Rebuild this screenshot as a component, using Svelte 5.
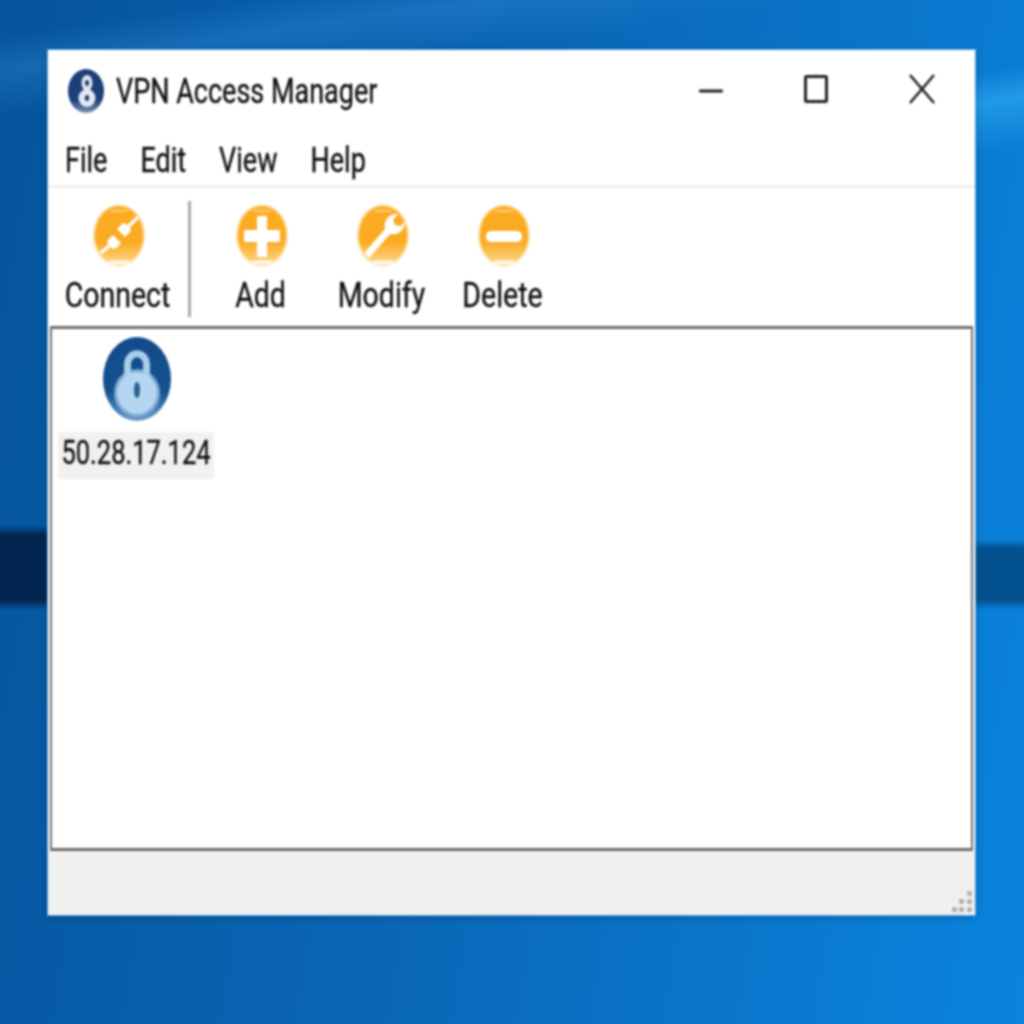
<script>
	const tools = [
		{ label: 'Add', kind: 'add' },
		{ label: 'Modify', kind: 'modify' },
		{ label: 'Delete', kind: 'delete' }
	];
	const menus = ['File', 'Edit', 'View', 'Help'];
</script>

{#snippet orb(kind)}
	<svg class="orb" viewBox="0 0 52 62" width="52" height="62">
		<ellipse cx="26" cy="31" rx="26" ry="31" fill="url(#orbRim)" />
		<ellipse cx="26" cy="31" rx="24" ry="29" fill="url(#orbFill)" />
		<ellipse cx="26" cy="6" rx="10" ry="1.5" fill="#fff" opacity="0.35" />
		{#if kind === 'add'}
			<path d="M22 12h8v14h13v10H30v15h-8V36H9V26h13z" fill="#fff" stroke="#fff" stroke-width="2" stroke-linejoin="round" />
		{:else if kind === 'delete'}
			<rect x="8" y="26" width="36" height="11" rx="5" fill="#fff" />
		{:else if kind === 'modify'}
			<path d="M8 47 L28 24 C26 15 33 8 41 9 L36 15 L38 20 L44 21 L48 16 C48 24 42 31 33 29 L13 52 Q9 53 8 47z" fill="#fff" />
		{:else}
			<path d="M9 47 L17 40" stroke="#fff" stroke-width="3.5" stroke-linecap="round" />
			<path d="M14 36 L20 30 L28 38 L22 44 Q17 44 14 36z" fill="#fff" />
			<path d="M24 24 L30 18 Q37 19 38 26 L32 32z" fill="#fff" />
			<path d="M36 21 L44 13" stroke="#fff" stroke-width="3.5" stroke-linecap="round" />
		{/if}
		<ellipse cx="26" cy="57" rx="12" ry="2" fill="#fff" opacity="0.8" />
	</svg>
{/snippet}

<div class="desktop">
	<svg class="defs" width="0" height="0" aria-hidden="true">
		<defs>
			<linearGradient id="orbRim" x1="0" y1="0" x2="0" y2="1">
				<stop offset="0" stop-color="#fcc561" />
				<stop offset="1" stop-color="#fff0d4" />
			</linearGradient>
			<linearGradient id="orbFill" x1="0" y1="0" x2="0" y2="1">
				<stop offset="0" stop-color="#fbab20" />
				<stop offset="0.6" stop-color="#fbab22" />
				<stop offset="1" stop-color="#fed88f" />
			</linearGradient>
			<linearGradient id="lockFill" x1="0" y1="0" x2="0" y2="1">
				<stop offset="0" stop-color="#134b8c" />
				<stop offset="0.65" stop-color="#14518f" />
				<stop offset="1" stop-color="#6f9cc8" />
			</linearGradient>
			<linearGradient id="iconFill" x1="0" y1="0" x2="0" y2="1">
				<stop offset="0" stop-color="#1d3f78" />
				<stop offset="0.7" stop-color="#1d4079" />
				<stop offset="1" stop-color="#7d92b5" />
			</linearGradient>
		</defs>
	</svg>

	<div class="window">
		<header class="titlebar">
			<svg class="app-icon" viewBox="0 0 36 44" width="36" height="44">
				<ellipse cx="18" cy="22" rx="18" ry="22" fill="url(#iconFill)" />
				<ellipse cx="19" cy="14" rx="5.5" ry="8" fill="#dfe5ee" />
				<ellipse cx="19" cy="29" rx="8.5" ry="9" fill="#e4e9f1" />
				<ellipse cx="19" cy="14" rx="2" ry="3" fill="#1d3f78" />
				<ellipse cx="19" cy="29" rx="2.2" ry="3" fill="#1d3f78" />
			</svg>
			<span class="title">VPN Access Manager</span>
			<div class="controls">
				<svg class="min" viewBox="0 0 24 4" width="24" height="4"><rect width="24" height="3" y="0.5" rx="1" fill="#222" /></svg>
				<svg viewBox="0 0 24 28" width="24" height="28"><rect x="1.5" y="1.5" width="21" height="25" rx="1" fill="none" stroke="#222" stroke-width="3" /></svg>
				<svg viewBox="0 0 26 30" width="26" height="30"><path d="M1 1 L25 29 M25 1 L1 29" stroke="#222" stroke-width="2.6" fill="none" /></svg>
			</div>
		</header>

		<nav class="menubar">
			{#each menus as m}
				<span class="menu">{m}</span>
			{/each}
		</nav>

		<div class="toolbar">
			<button class="tool connect">
				{@render orb('connect')}
				<span class="tool-label">Connect</span>
			</button>
			<div class="sep"></div>
			{#each tools as t}
				<button class="tool">
					{@render orb(t.kind)}
					<span class="tool-label">{t.label}</span>
				</button>
			{/each}
		</div>

		<div class="list">
			<div class="item">
				<svg class="lock" viewBox="0 0 68 84" width="68" height="84">
					<ellipse cx="34" cy="42" rx="34" ry="42" fill="url(#lockFill)" />
					<ellipse cx="34" cy="56" rx="23" ry="24" fill="#7eaad3" />
					<path d="M24.5 44 V28 C24.5 13 43.5 13 43.5 28 V44" fill="none" stroke="#a9cdec" stroke-width="7" />
					<ellipse cx="34" cy="56" rx="20" ry="21" fill="#b5d6f1" />
					<ellipse cx="34" cy="53" rx="3" ry="8" fill="#2b5f96" />
				</svg>
				<div class="item-label"><span>50.28.17.124</span></div>
			</div>
		</div>

		<footer class="statusbar">
			<svg class="grip" viewBox="0 0 20 22" width="20" height="22">
				<g fill="#b0b0b0">
					<rect x="15" y="1" width="5" height="5" rx="1.5" />
					<rect x="7" y="9" width="5" height="5" rx="1.5" />
					<rect x="15" y="9" width="5" height="5" rx="1.5" />
					<rect x="0" y="17" width="5" height="5" rx="1.5" />
					<rect x="7" y="17" width="5" height="5" rx="1.5" />
					<rect x="15" y="17" width="5" height="5" rx="1.5" />
				</g>
			</svg>
		</footer>
	</div>
</div>

<style>
	:global(body) {
		margin: 0;
	}
	.desktop {
		box-sizing: border-box;
		width: 1024px;
		height: 1024px;
		padding: 50px 49px 109px 48px;
		overflow: hidden;
		background:
			linear-gradient(180deg, transparent 525px, #02264f 535px, #02264f 600px, transparent 610px) 0 0 / 48px 100% no-repeat,
			linear-gradient(180deg, transparent 540px, #03528f 548px, #03528f 600px, transparent 610px) 100% 0 / 49px 100% no-repeat,
			linear-gradient(172deg, transparent 3%, rgba(70, 160, 235, 0.25) 6%, transparent 10%),
			linear-gradient(172deg, transparent 7%, rgba(60, 190, 255, 0.45) 10%, transparent 15%) 100% 0 / 49px 100% no-repeat,
			linear-gradient(100deg, #05549c 0%, #0a66b5 45%, #0a84de 100%);
	}
	.defs {
		position: absolute;
	}
	.window {
		height: 100%;
		display: flex;
		flex-direction: column;
		background: #fff;
		color: #111;
		font-family: Roboto, "Open Sans", sans-serif;
		-webkit-text-stroke: 0.3px #111;
		box-shadow: 0 0 0 1px #5aa6e6, 0 2px 8px rgba(0, 0, 0, 0.25);
		filter: blur(0.8px);
	}
	.titlebar {
		height: 85px;
		display: flex;
		align-items: center;
		padding: 0 0 4px 20px;
		box-sizing: border-box;
	}
	.title {
		display: inline-block;
		margin-left: 12px;
		font-size: 27px;
		transform: scaleY(1.3);
	}
	.controls {
		margin-left: auto;
		margin-top: -4px;
		display: flex;
		align-items: center;
		gap: 81px;
		padding-right: 40px;
	}
	.min {
		margin-top: 4px;
	}
	.menubar {
		height: 50px;
		display: flex;
		gap: 33px;
		align-items: center;
		padding-left: 17px;
		font-size: 27px;
		border-bottom: 3px solid #f0f0f0;
	}
	.menu {
		display: inline-block;
		transform: scaleY(1.3);
	}
	.toolbar {
		height: 138px;
		box-sizing: border-box;
		display: flex;
		padding: 17px 0 0 17px;
	}
	.tool {
		width: 121px;
		padding: 0;
		border: none;
		background: none;
		color: inherit;
		font: inherit;
		font-size: 28.5px;
		display: flex;
		flex-direction: column;
		align-items: center;
		gap: 12px;
	}
	.tool-label {
		display: inline-block;
		transform: scaleY(1.22);
	}
	.tool .orb {
		margin-left: 3px;
	}
	.tool.connect {
		width: 105px;
	}
	.sep {
		width: 3px;
		height: 116px;
		margin: -4px 9px 0 18px;
		background: #aaa;
	}
	.list {
		flex: 1;
		margin: 0 2px;
		border: 2px solid #6e6e6e;
		border-top-width: 3px;
		border-bottom-width: 3px;
		background: #fff;
		padding: 8px 0 0 6px;
	}
	.item {
		width: 156px;
		display: flex;
		flex-direction: column;
		align-items: center;
		gap: 11px;
	}
	.lock {
		margin-left: 2px;
	}
	.item-label {
		width: 100%;
		height: 47px;
		line-height: 40px;
		text-align: center;
		background: #f1f1f1;
		font-size: 25.5px;
	}
	.item-label span {
		display: inline-block;
		transform: scaleY(1.32);
	}
	.statusbar {
		height: 64px;
		background: #f0f0f0;
		position: relative;
	}
	.grip {
		position: absolute;
		right: 3px;
		bottom: 3px;
	}
</style>
